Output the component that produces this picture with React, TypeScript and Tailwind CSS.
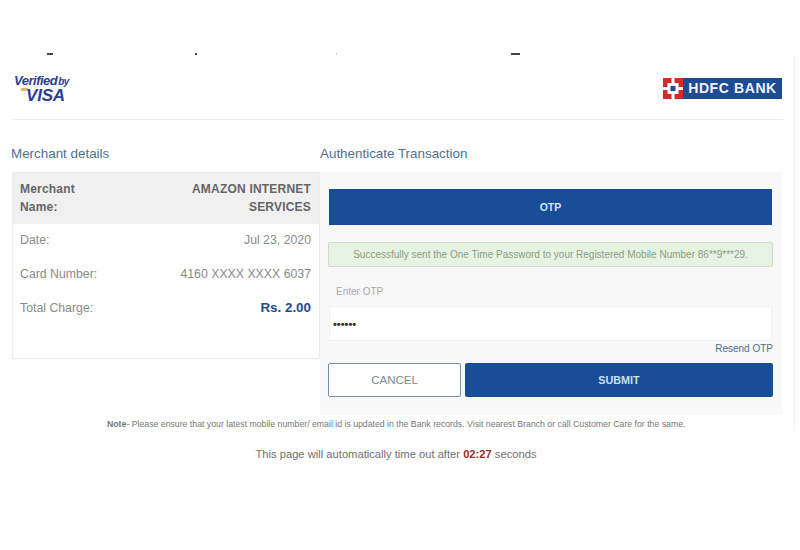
const SANS = "font-['Liberation_Sans',Arial,sans-serif]"

const ROWS = [
  { label: 'Date:', value: 'Jul 23, 2020' },
  { label: 'Card Number:', value: '4160 XXXX XXXX 6037' },
]

function VisaLogo() {
  return (
    <div className="flex flex-col items-center w-[57px] ml-[1px] font-['Liberation_Sans',Arial,sans-serif] italic font-bold text-[#2a3f8f] leading-none">
      <div className="flex items-end tracking-[-0.5px]">
        <span className="text-[13px]">Verified</span>
        <span className="text-[10px] ml-[1px]">by</span>
      </div>
      <div className="relative text-[17px] ml-[8px] tracking-[-0.2px]">
        <span className="absolute left-[-5px] top-[1px] w-[7px] h-[3px] bg-[#e0b869]" />
        <span className="relative">VISA</span>
      </div>
    </div>
  )
}

function HdfcLogo() {
  return (
    <div className="flex w-[119px] h-[21px] bg-[#1c4c94]">
      <svg width="20" height="21" viewBox="0 0 20 21" className="shrink-0">
        <rect width="20" height="21" fill="#d9272e" />
        <path d="M8.5 0h3v21h-3zM0 9h20v3H0z" fill="#fff" />
        <rect x="4.5" y="5" width="11" height="11" fill="#fff" />
        <rect x="7.5" y="8" width="5" height="5" fill="#1c4c94" />
      </svg>
      <span className="flex-1 text-center text-[#f2f5fa] font-['Liberation_Sans',Arial,sans-serif] font-bold text-[14px] leading-[21px] tracking-[0.6px]">
        HDFC BANK
      </span>
    </div>
  )
}

export default function App() {
  return (
    <div className={`w-[800px] h-[550px] overflow-hidden bg-white ${SANS}`}>
      {/* Bits of a cut-off line above the card */}
      <div className="flex items-start h-[56px] pt-[53px] pl-[47px]">
        <span className="w-[6px] h-[2px] bg-[#444444]" />
        <span className="ml-[142px] w-[2px] h-[2px] bg-[#444444]" />
        <span className="ml-[139px] w-[1px] h-[2px] bg-[#cccccc]" />
        <span className="ml-[174px] w-[9px] h-[2px] bg-[#444444]" />
      </div>

      <div className="w-[795px] border-r border-[#f2f2f2]">
        <div className="w-[771px] ml-[12px]">
          {/* Logos */}
          <div className="flex items-start justify-between h-[64px] border-b border-[#eeeeee] pt-[18px] pr-[1px]">
            <VisaLogo />
            <div className="mt-[4px]">
              <HdfcLogo />
            </div>
          </div>

          <div className="flex mt-[26px]">
            {/* Merchant details */}
            <div className="w-[308px] shrink-0">
              <h2 className="text-[13.4px] leading-[16px] text-[#4f6f90] -ml-[1px]">Merchant details</h2>
              <div className="mt-[10px] h-[187px] border border-[#ececec] shadow-[0_0_2px_rgba(0,0,0,0.05)]">
                <div className="flex justify-between bg-[#f0f0f0] pl-[7px] pr-[8px] pt-[7px] h-[51px] text-[12px] leading-[18px] font-bold text-[#666666] tracking-[0.2px]">
                  <span className="w-[70px]">Merchant Name:</span>
                  <span className="w-[150px] text-right">AMAZON INTERNET SERVICES</span>
                </div>
                <div className="flex flex-col gap-[16px] pl-[7px] pr-[8px] pt-[7px] text-[12.3px] leading-[18px] text-[#8a8a8a]">
                  {ROWS.map(({ label, value }) => (
                    <div key={label} className="flex justify-between">
                      <span>{label}</span>
                      <span>{value}</span>
                    </div>
                  ))}
                  <div className="flex justify-between">
                    <span>Total Charge:</span>
                    <span className="font-bold text-[13.4px] text-[#1f4a8a]">Rs. 2.00</span>
                  </div>
                </div>
              </div>
            </div>

            {/* Authenticate */}
            <div className="w-[462px]">
              <h2 className="text-[13.4px] leading-[16px] text-[#4f6f90]">Authenticate Transaction</h2>
              <div className="mt-[10px] bg-[#f8f8f8] h-[243px] pl-[9px] pr-[10px] pt-[17px]">
                <div className="h-[36px] bg-[#174e96] text-center text-[10.5px] leading-[36px] font-bold text-[#d5e3f2]">
                  OTP
                </div>
                <div className="mt-[17px] -ml-[1px] h-[25px] w-[445px] bg-[#e6f3e2] border border-[#cfdccb] rounded-[2px] text-center text-[10px] leading-[23px] text-[#8a9f80] whitespace-nowrap">
                  Successfully sent the One Time Password to your Registered Mobile Number 86**9***29.
                </div>
                <label className="block mt-[19px] ml-[7px] text-[10px] leading-[12px] text-[#a8a8a8]">Enter OTP</label>
                <div className="mt-[8px] h-[35px] bg-white border border-[#f0f0f0] pl-[3px] text-[11px] leading-[35px] text-[#333333] font-bold">
                  ••••••
                </div>
                <div className="pt-[1px] -mr-[1px] text-right text-[10px] leading-[14px] text-[#4f6f90]">Resend OTP</div>
                <div className="flex gap-[4px] mt-[7px] -ml-[1px]">
                  <button className="w-[133px] shrink-0 h-[34px] pt-[1px] bg-white border border-[#7a90a8] rounded-[2px] text-[11.5px] text-[#7d8a96]">
                    CANCEL
                  </button>
                  <button className="w-[308px] shrink-0 h-[34px] bg-[#174e96] rounded-[2px] text-[10.8px] font-bold text-[#cfdff0]">
                    SUBMIT
                  </button>
                </div>
              </div>
            </div>
          </div>
        </div>

        {/* Footer note */}
        <p className="mt-[3px] ml-[107px] text-[8.73px] leading-[12px] text-[#777777] whitespace-nowrap">
          <span className="font-bold">Note</span>- Please ensure that your latest mobile number/ email id is updated in the Bank records. Visit nearest Branch or call Customer Care for the same.
        </p>
      </div>

      <p className="mt-[16px] text-center ml-[-8px] text-[11.2px] leading-[16px] text-[#707070]">
        This page will automatically time out after <span className="font-bold text-[#a02a2a]">02:27</span> seconds
      </p>
    </div>
  )
}
